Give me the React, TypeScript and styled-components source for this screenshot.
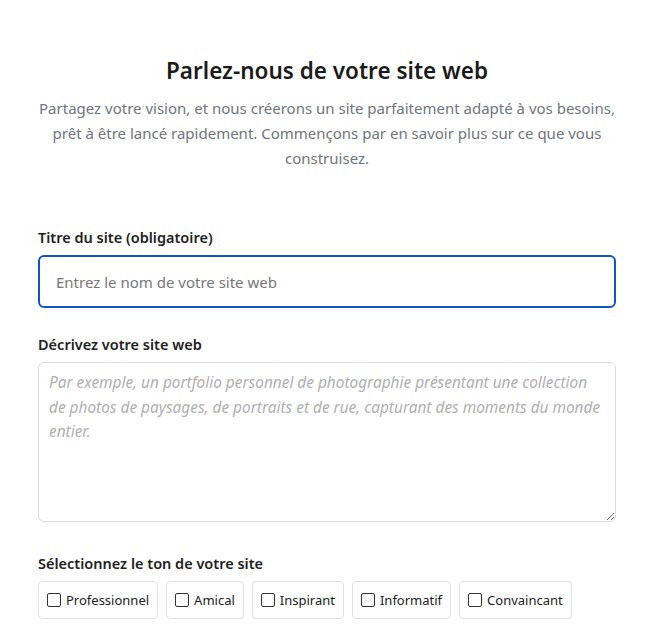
import React, { useState } from 'react'
import styled, { createGlobalStyle } from 'styled-components'

const GlobalStyle = createGlobalStyle`
  body {
    margin: 0;
    background: #fff;
    font-family: "Noto Sans", "Open Sans", sans-serif;
    color: #212529;
  }
  * { box-sizing: border-box; }
`

const Page = styled.main`
  padding: 56px 32px 20px 38px;
`

const Header = styled.header`
  text-align: center;
  margin-bottom: 56px;
`

const Title = styled.h1`
  margin: 0 0 10px;
  font-size: 22.5px;
  font-weight: 600;
  line-height: 30px;
  color: #1b1b1b;
`

const Lead = styled.p`
  margin: 0;
  font-size: 15px;
  line-height: 25px;
  color: #6f757b;
`

const Field = styled.div<{ $gap?: number }>`
  margin-bottom: ${p => p.$gap ?? 26}px;
`

const Label = styled.label`
  display: block;
  font-size: 14.5px;
  font-weight: 600;
  line-height: 20px;
  margin-bottom: 8px;
  color: #222;
`

const TextInput = styled.input`
  display: block;
  width: 100%;
  height: 53px;
  padding: 0 16px;
  border: 2px solid #1056c2;
  border-radius: 6px;
  font-family: inherit;
  font-size: 15px;
  color: #333;
  outline: none;
  &::placeholder { color: #777; }
`

const TextArea = styled.textarea`
  display: block;
  width: 100%;
  height: 160px;
  margin-top: 1px;
  padding: 8px 10px;
  border: 1px solid #dcdcdc;
  border-radius: 6px;
  font-family: inherit;
  font-size: 15.4px;
  line-height: 24.5px;
  resize: vertical;
  outline: none;
  &::placeholder { color: #b0b0b0; font-style: italic; }
`

const ToneRow = styled.div`
  display: flex;
  gap: 8px;
  flex-wrap: wrap;
  margin-top: 2px;
`

const Chip = styled.label<{ $checked: boolean }>`
  display: inline-flex;
  align-items: center;
  height: 38px;
  padding: 0 8px;
  border: 1px solid ${p => (p.$checked ? '#1056c2' : '#e3e3e3')};
  border-radius: 4px;
  font-size: 13px;
  color: #222;
  cursor: pointer;
`

const Box = styled.input`
  appearance: none;
  width: 14px;
  height: 14px;
  margin: 0 5px 0 0;
  border: 1px solid #333;
  border-radius: 2px;
  background: #fff;
  &:checked { background: #1056c2; border-color: #1056c2; }
`

const tones = ['Professionnel', 'Amical', 'Inspirant', 'Informatif', 'Convaincant']

export default function App() {
  const [selected, setSelected] = useState<string[]>([])
  const toggle = (t: string) =>
    setSelected(s => (s.includes(t) ? s.filter(x => x !== t) : [...s, t]))

  return (
    <>
      <GlobalStyle />
      <Page>
        <Header>
          <Title>Parlez-nous de votre site web</Title>
          <Lead>
            Partagez votre vision, et nous créerons un site parfaitement adapté à vos besoins,
            prêt à être lancé rapidement. Commençons par en savoir plus sur ce que vous
            construisez.
          </Lead>
        </Header>

        <Field>
          <Label htmlFor="title">Titre du site (obligatoire)</Label>
          <TextInput id="title" autoFocus placeholder="Entrez le nom de votre site web" />
        </Field>

        <Field $gap={31}>
          <Label htmlFor="desc">Décrivez votre site web</Label>
          <TextArea
            id="desc"
            placeholder="Par exemple, un portfolio personnel de photographie présentant une collection de photos de paysages, de portraits et de rue, capturant des moments du monde entier."
          />
        </Field>

        <Field>
          <Label as="div">Sélectionnez le ton de votre site</Label>
          <ToneRow>
            {tones.map(t => (
              <Chip key={t} $checked={selected.includes(t)}>
                <Box type="checkbox" checked={selected.includes(t)} onChange={() => toggle(t)} />
                {t}
              </Chip>
            ))}
          </ToneRow>
        </Field>
      </Page>
    </>
  )
}
